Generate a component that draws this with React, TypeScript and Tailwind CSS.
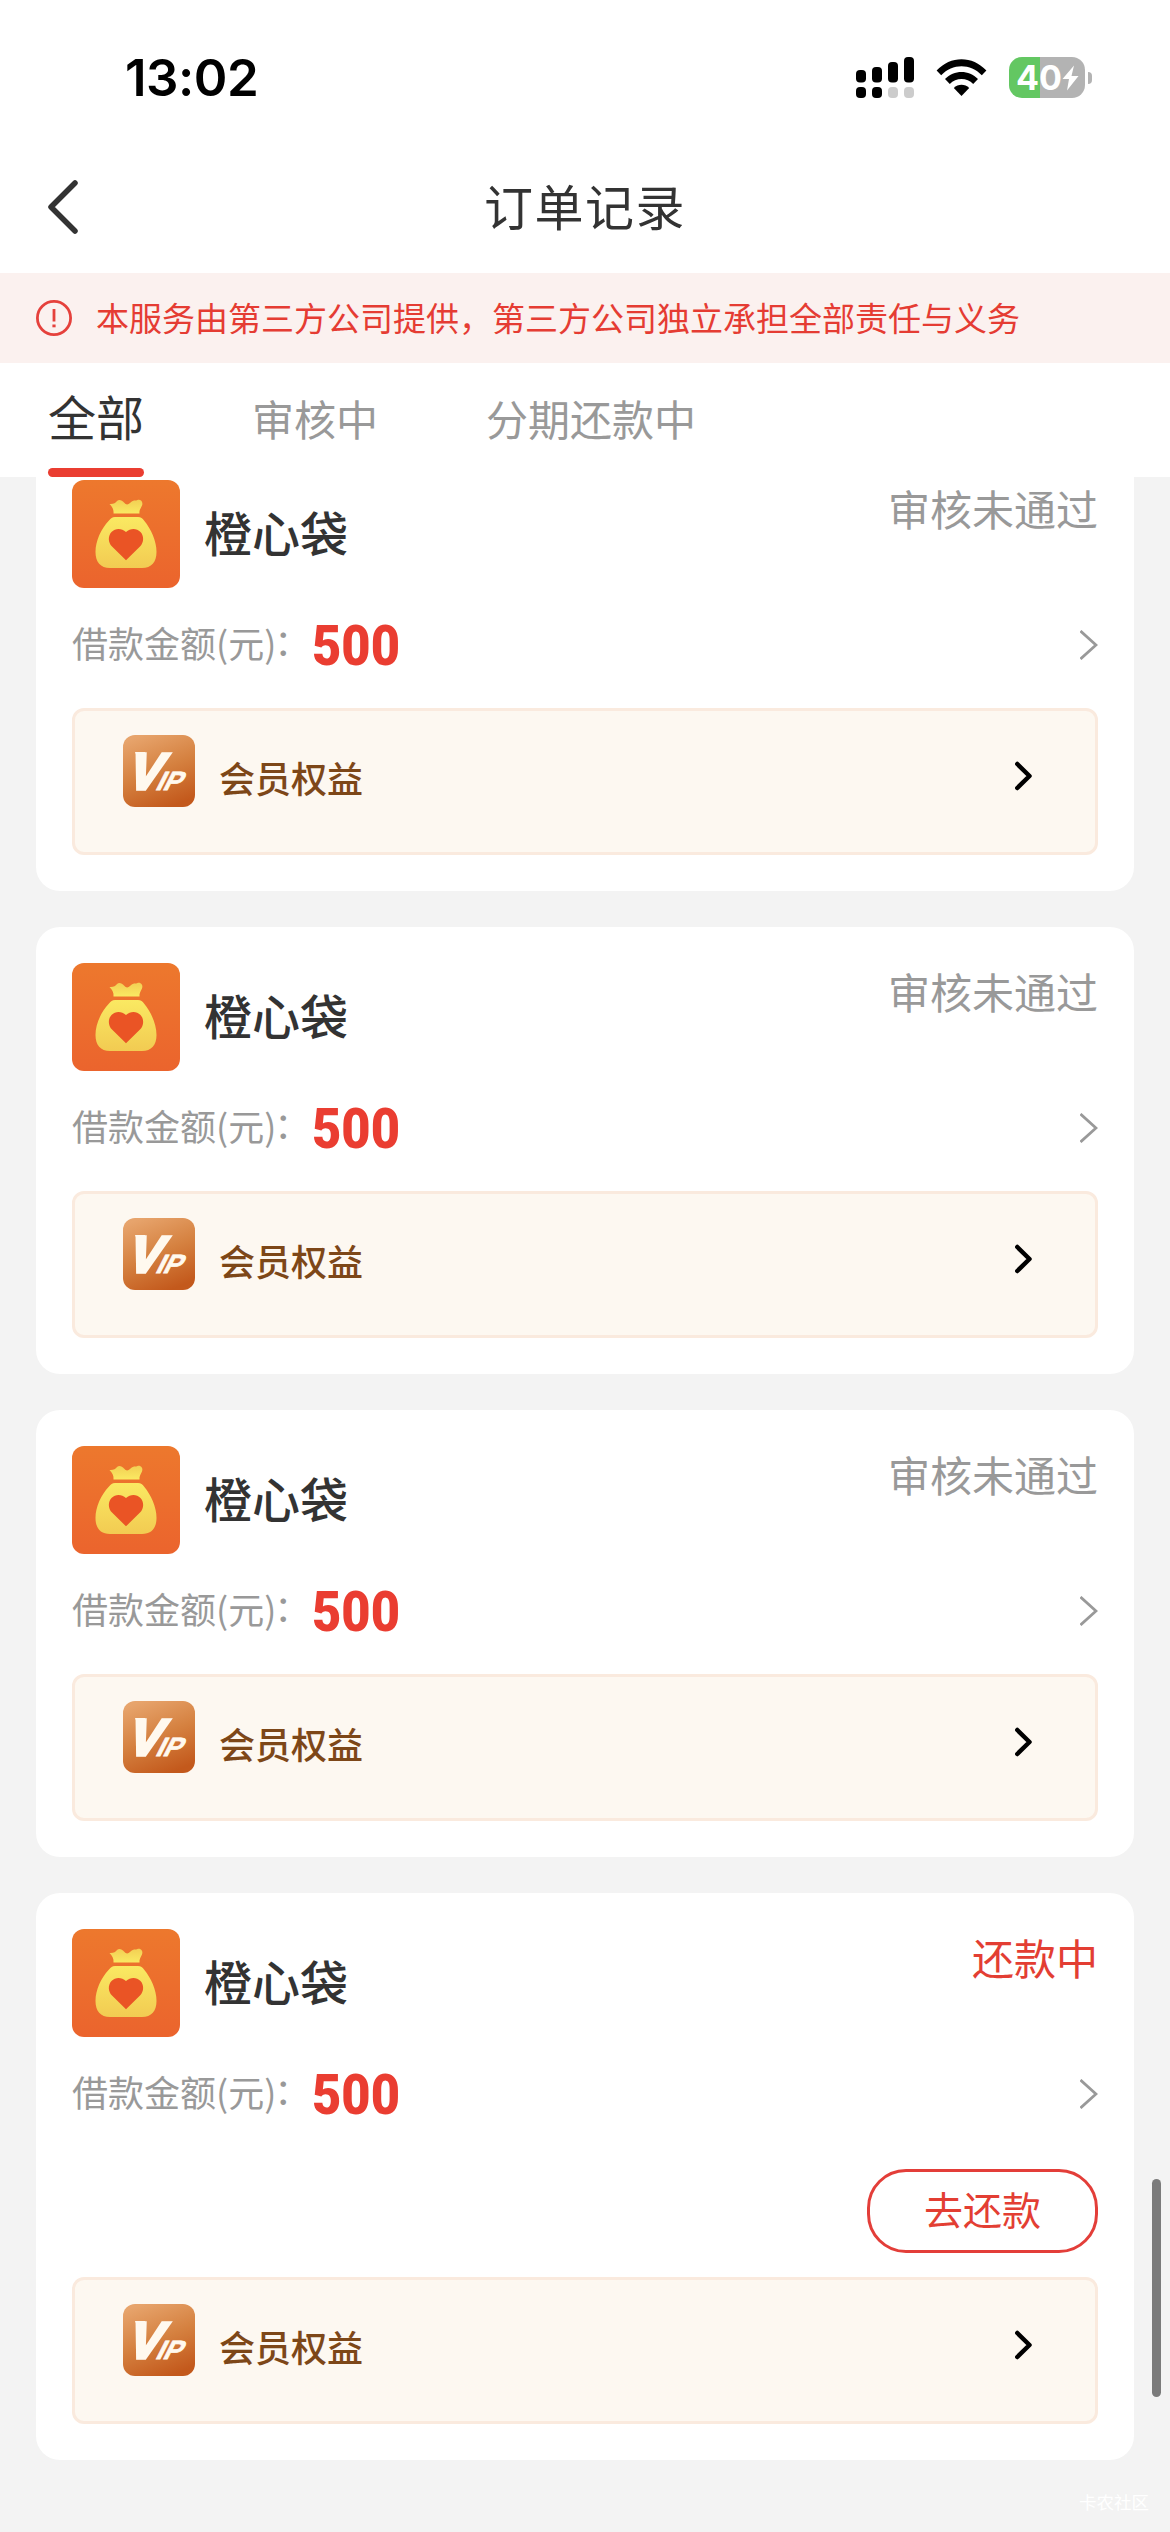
interface Order {
  name: string;
  amount: string;
  status: string;
  repaying?: boolean;
}

const orders: Order[] = [
  { name: '橙心袋', amount: '500', status: '审核未通过' },
  { name: '橙心袋', amount: '500', status: '审核未通过' },
  { name: '橙心袋', amount: '500', status: '审核未通过' },
  { name: '橙心袋', amount: '500', status: '还款中', repaying: true },
];

const tabs = ['全部', '审核中', '分期还款中'];

function StatusBar() {
  return (
    <div className="h-[156px] shrink-0 flex justify-between items-start pl-[125px] pr-[78px] pt-[57px]">
      <div className="font-['Inter'] font-semibold text-[51px] leading-[42px] tracking-[-0.5px] text-black">13:02</div>
      <div className="flex items-start gap-[22px]">
        <svg className="w-[58px] h-[41px]" viewBox="0 0 58 41">
          <rect x="0" y="13" width="10" height="12.5" rx="4" />
          <rect x="16" y="10" width="10" height="15.5" rx="4" />
          <rect x="32" y="5" width="10" height="20.5" rx="4" />
          <rect x="48" y="0" width="10" height="25.5" rx="4" />
          <rect x="0" y="30" width="10" height="11" rx="4" />
          <rect x="16" y="30" width="10" height="11" rx="4" />
          <rect x="32" y="30" width="10" height="11" rx="4" fill="#cccccc" />
          <rect x="48" y="30" width="10" height="11" rx="4" fill="#cccccc" />
        </svg>
        <svg className="w-[51px] h-[41px]" viewBox="0 0 51 41">
          <path d="M0.6 13.6 C14.5 -1.6 36.5 -1.6 50.4 13.6 L45.8 18.2 C34.5 6.2 16.5 6.2 5.2 18.2 Z" strokeLinejoin="round" />
          <path d="M9 22 C18 12.600 33 12.600 42 22 L37.200 27 C31 20.400 20 20.400 13.800 27 Z" />
          <path d="M17.800 31 C22 26.600 29 26.600 33.200 31 L25.500 39 Z" />
        </svg>
        <div className="flex items-center gap-[3px]">
          <div className="w-[76px] h-[41px] rounded-[13px] bg-[linear-gradient(90deg,#63c762_40.5%,#b3b3b3_40.5%)] flex items-center pl-[7px]">
            <span className="font-['Inter'] font-bold text-[34px] leading-[41px] text-white">40</span>
            <svg className="w-[17px] h-[26px]" viewBox="0 0 17 26">
              <path d="M12 0.500 L0.500 14 H7 L5 25.500 L16.500 11 H9.500 Z" fill="#fff" />
            </svg>
          </div>
          <div className="w-1 h-3 rounded-r-full bg-[#b3b3b3]" />
        </div>
      </div>
    </div>
  );
}

function BagIcon() {
  return (
    <svg className="w-[108px] h-[108px] shrink-0" viewBox="0 0 108 108">
      <defs>
        <linearGradient id="bagBg" x1="0" y1="0" x2="0" y2="1">
          <stop offset="0" stopColor="#ed782d" />
          <stop offset="1" stopColor="#eb642d" />
        </linearGradient>
        <linearGradient id="bagTop" x1="0" y1="0" x2="0" y2="1">
          <stop offset="0" stopColor="#f2cf54" />
          <stop offset="1" stopColor="#fae962" />
        </linearGradient>
        <linearGradient id="bagBody" x1="0" y1="0" x2="0" y2="1">
          <stop offset="0" stopColor="#fae962" />
          <stop offset="1" stopColor="#f2cb52" />
        </linearGradient>
      </defs>
      <rect width="108" height="108" rx="12" fill="url(#bagBg)" />
      <path
        d="M37.500 24 C41 24.500 43.500 23 45 21 C47 19 50 20 52 22.500 C54 25 56 25 58 23 C61 19.500 64 21 65.500 20 C68.500 19 71.500 22 70 25.500 C69 28 67 30 67.500 33.500 H41.500 C42 29.500 40 26.500 37.500 24 Z"
        fill="url(#bagTop)"
      />
      <path
        d="M43 37 H66 C69 37 70.500 38.500 72 40.500 C79 49 84.500 61 84.500 72 C84.500 82 79.500 88 70 88 H38 C28.500 88 23.500 82 23.500 72 C23.500 61 29 49 37 40.500 C39 38.500 40 37 43 37 Z"
        fill="url(#bagBody)"
      />
      <path
        d="M54 80.300 L40 66.500 C36 62.500 35.800 56 39.500 52 C43.500 48 49.500 48 54 52 C58.500 48 64.500 48 68.500 52 C72.200 56 72 62.500 68 66.500 Z"
        fill="#ea5425"
      />
    </svg>
  );
}

function VipIcon() {
  return (
    <svg className="w-[72px] h-[72px] shrink-0 overflow-visible" viewBox="0 0 72 72">
      <defs>
        <linearGradient id="vipBg" x1="0.25" y1="0" x2="0.65" y2="1">
          <stop offset="0" stopColor="#e7a46c" />
          <stop offset="0.5" stopColor="#d58140" />
          <stop offset="1" stopColor="#c3591c" />
        </linearGradient>
      </defs>
      <rect width="72" height="72" rx="12" fill="url(#vipBg)" />
      <g fill="#fff9ef" stroke="#fff9ef" fontFamily="Liberation Sans" fontWeight="700">
        <text transform="translate(2 53.500) skewX(-19)" fontSize="51" strokeWidth="3.500" textLength="33" lengthAdjust="spacingAndGlyphs">V</text>
        <text transform="translate(31.500 54.800) skewX(-27)" fontSize="26.500" strokeWidth="0.800">IP</text>
      </g>
      <path d="M12 17 H22 V20.500 H13.500 Z" fill="#fff9ef" />
    </svg>
  );
}

function OrderCard({ name, amount, status, repaying }: Order) {
  return (
    <div className="bg-white rounded-[24px] p-9 flex flex-col">
      <div className="flex items-start">
        <BagIcon />
        <div className="ml-6 flex-1 text-[48px] leading-[102px] font-medium text-[#333333]">{name}</div>
        <div className={repaying ? 'text-[42px] leading-[56px] text-[#e33e33]' : 'text-[42px] leading-[56px] text-[#999999]'}>
          {status}
        </div>
      </div>
      <div className="h-[114px] mb-1.5 flex items-center">
        <span className="pb-1.5 text-4xl text-[#999999]">
          借款金额(元)<span className="inline-block -translate-x-0.5 -translate-y-0.5">：</span>
        </span>
        <div className="flex-1 pt-[3px]">
          <span className="inline-block origin-left scale-x-[0.92] font-['Roboto'] font-black text-[55px] leading-none text-[#ea3d31]">{amount}</span>
        </div>
        <svg className="w-[18px] h-[30px]" viewBox="0 0 18 30" fill="none" stroke="#999" strokeWidth="2.800">
          <path d="M0.500 1 L16 15 L0.500 29" />
        </svg>
      </div>
      {repaying && (
        <div className="mt-3 mb-6 flex justify-end">
          <button className="w-[231px] h-[84px] rounded-[39px] border-3 border-[#e33e39] pb-1.5 text-[39px] leading-[72px] text-[#e33e33]">
            去还款
          </button>
        </div>
      )}
      <div className="h-[147px] rounded-xl border-3 border-[#faeade] bg-[#fdf8f1] flex items-start pl-12 pr-[63px] pt-6">
        <VipIcon />
        <span className="ml-6 mt-1.5 flex-1 text-4xl leading-[72px] font-medium text-[#7d4718]">会员权益</span>
        <svg className="w-[17px] h-[30px] mt-[26px]" viewBox="0 0 17 30" fill="none" stroke="#000" strokeWidth="4.500" strokeLinecap="round" strokeLinejoin="round">
          <path d="M2.300 3 L14.500 15 L2.300 27" />
        </svg>
      </div>
    </div>
  );
}

export default function App() {
  return (
    <div className="relative w-[1170px] h-[2532px] overflow-hidden flex flex-col bg-[#f3f3f3] font-['Noto_Sans_CJK_SC',sans-serif]">
      <div className="relative z-10 bg-white shrink-0 flex flex-col">
        <StatusBar />
        <div className="h-[117px] grid grid-cols-[1fr_auto_1fr] items-center px-12 pb-[15px]">
          <svg className="w-[30px] h-[54px]" viewBox="0 0 30 54" fill="none" stroke="#333" strokeWidth="5.500" strokeLinecap="round" strokeLinejoin="round">
            <path d="M27 3 L3 27 L27 51" />
          </svg>
          <div className="pb-[5px] text-[49px] tracking-[1.500px] leading-[72px] text-[#333333]">订单记录</div>
        </div>
        <div className="h-[90px] bg-[#fbf1ef] flex items-center px-9 gap-6 text-[33px] text-[#e53c33]">
          <svg className="w-9 h-9" viewBox="0 0 36 36" fill="none" stroke="#e5413c" strokeWidth="2.800">
            <circle cx="18" cy="18" r="16.600" />
            <path d="M18 9 V21.500" />
            <path d="M18 24.500 V27.300" strokeWidth="3.200" />
          </svg>
          <span className="pb-px whitespace-nowrap">本服务由第三方公司提供，第三方公司独立承担全部责任与义务</span>
        </div>
        <div className="h-[114px] flex gap-[108px] px-12">
          {tabs.map((tab, i) =>
            i === 0 ? (
              <div key={tab} className="flex flex-col justify-between text-5xl leading-[104px] text-[#333333]">
                <span className="h-[105px]">{tab}</span>
                <div className="h-[9px] rounded-full bg-[#ea3d31]" />
              </div>
            ) : (
              <div key={tab} className="text-[42px] leading-[109px] text-[#999999]">{tab}</div>
            )
          )}
        </div>
      </div>
      <div className="-mt-[33px] px-9 flex flex-col gap-9">
        {orders.map((order, i) => (
          <OrderCard key={i} {...order} />
        ))}
      </div>
      <div className="absolute right-[9px] top-[2179px] w-[9px] h-[218px] rounded-full bg-[#7b7b7b]" />
      <div className="absolute right-[21px] bottom-[17px] text-[17.5px] leading-[26px] text-white">卡农社区</div>
    </div>
  );
}
